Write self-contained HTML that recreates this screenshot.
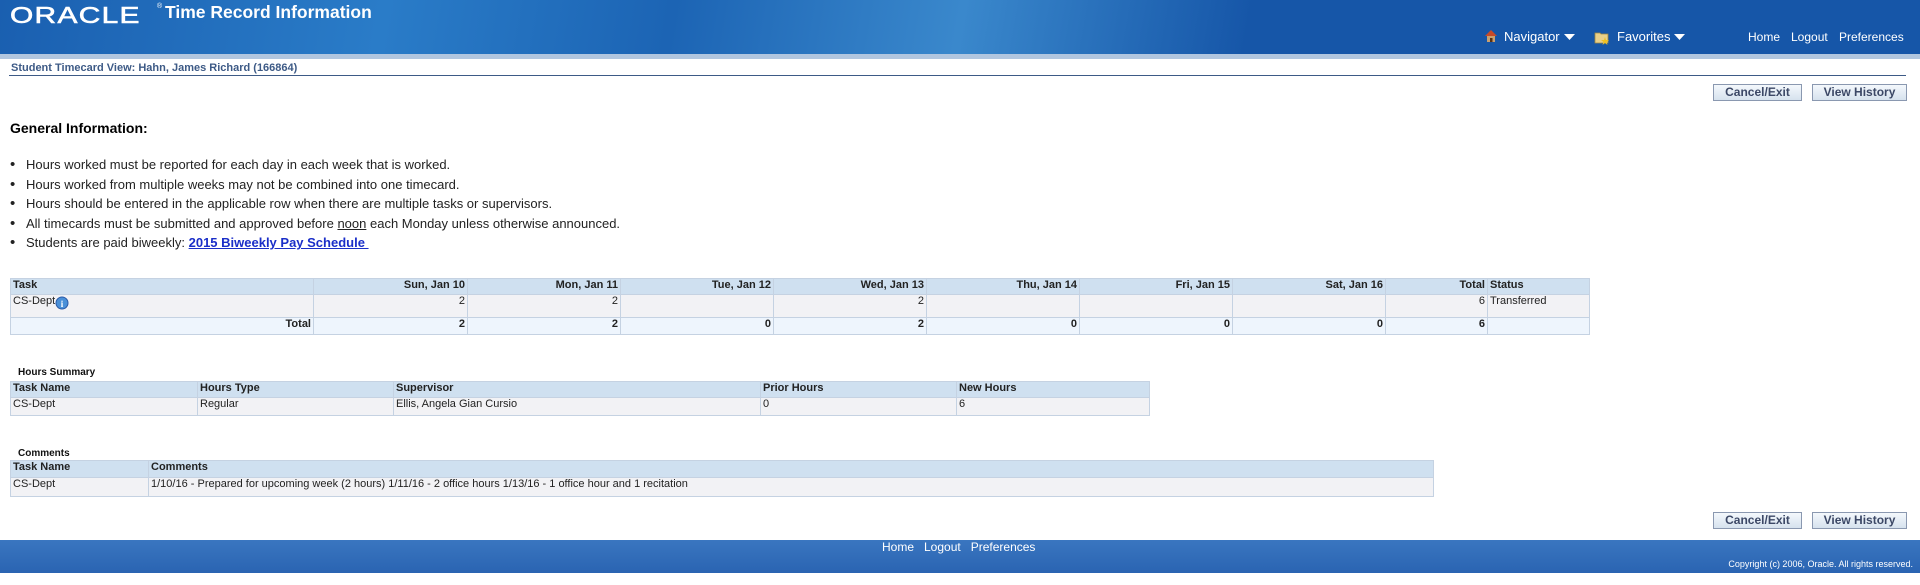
<!DOCTYPE html>
<html><head><meta charset="utf-8"><style>
*{margin:0;padding:0;box-sizing:border-box}
body{width:1920px;height:585px;position:relative;background:#fff;font-family:"Liberation Sans",sans-serif;overflow:hidden}
.a{position:absolute;white-space:nowrap}
#hdr{position:absolute;left:0;top:0;width:1920px;height:54px;background:linear-gradient(100deg,#1a5fb0 0%,#2a7cc8 20%,#1c64b4 35%,#3a88cc 50%,#1656a8 65%,#1656a8 100%)}
#band{position:absolute;left:0;top:54px;width:1920px;height:5px;background:#b1c6df}
.hl{color:#fff;font-size:13px}
.btn{position:absolute;height:17px;border:1px solid #8a98b0;background:linear-gradient(#f4f8fc,#d6e2ee);color:#3c4866;font-weight:bold;font-size:12px;text-align:center;line-height:15px}
table{position:absolute;border-collapse:collapse;font-size:11px;color:#222}
td,th{border:1px solid #c5d2e2;padding:0 2px;white-space:nowrap;vertical-align:top}
th{background:#cfe0f0;text-align:left;font-weight:bold;color:#222}
.r{text-align:right}
.d td{background:#f2f2f5}
.t td{background:#eef5fd;font-weight:bold;text-align:right}
.b{display:inline-block;width:16px;font-size:15px}
</style></head><body>
<div id="hdr"></div><div id="band"></div>
<div class="a" style="left:10px;top:2px;color:#fff;font-size:23px;letter-spacing:1px;transform:scaleX(1.3);transform-origin:left;-webkit-text-stroke:0.6px #fff">ORACLE</div>
<div class="a" style="left:157px;top:3px;color:#fff;font-size:7px">®</div>
<div class="a" style="left:165px;top:2px;color:#fff;font-size:17.5px;font-weight:bold">Time Record Information</div>
<svg class="a" style="left:1484px;top:29px" width="14" height="14" viewBox="0 0 14 14"><path d="M1 7 L7 1 L13 7Z" fill="#c84a28"/><rect x="3" y="7" width="8" height="6" fill="#c9a070"/><rect x="6" y="9" width="2.5" height="4" fill="#5a3010"/></svg>
<div class="a hl" style="left:1504px;top:29px">Navigator</div>
<svg class="a" style="left:1564px;top:34px" width="11" height="7"><path d="M0 0H11L5.5 6Z" fill="#fff"/></svg>
<svg class="a" style="left:1594px;top:30px" width="17" height="15" viewBox="0 0 17 15"><path d="M1 3H6L7 4H14V13H1Z" fill="#e8d08a" stroke="#a08840" stroke-width=".8"/><path d="M11 7L12 10L15 10L12.5 12L13.5 15L11 13L8.5 15L9.5 12L7 10L10 10Z" fill="#f0c020"/></svg>
<div class="a hl" style="left:1617px;top:29px">Favorites</div>
<svg class="a" style="left:1674px;top:34px" width="11" height="7"><path d="M0 0H11L5.5 6Z" fill="#fff"/></svg>
<div class="a hl" style="left:1748px;top:30px;font-size:12px">Home</div>
<div class="a hl" style="left:1791px;top:30px;font-size:12px">Logout</div>
<div class="a hl" style="left:1839px;top:30px;font-size:12px">Preferences</div>

<div class="a" style="left:11px;top:62px;font-size:11px;font-weight:bold;color:#3d5a86">Student Timecard View: Hahn, James Richard (166864)</div>
<div class="a" style="left:9px;top:75px;width:1897px;height:1px;background:#3d5a86"></div>
<div class="btn" style="left:1713px;top:84px;width:89px">Cancel/Exit</div>
<div class="btn" style="left:1812px;top:84px;width:95px">View History</div>

<div class="a" style="left:10px;top:120px;font-size:14px;font-weight:bold;color:#000">General Information:</div>
<div class="a" style="left:10px;top:155px;font-size:13px;color:#222;line-height:19.6px">
<div><span class="b">•</span>Hours worked must be reported for each day in each week that is worked.</div>
<div><span class="b">•</span>Hours worked from multiple weeks may not be combined into one timecard.</div>
<div><span class="b">•</span>Hours should be entered in the applicable row when there are multiple tasks or supervisors.</div>
<div><span class="b">•</span>All timecards must be submitted and approved before <u>noon</u> each Monday unless otherwise announced.</div>
<div><span class="b">•</span>Students are paid biweekly: <b style="color:#1a2ec8;text-decoration:underline">2015 Biweekly Pay Schedule&nbsp;</b></div>
</div>

<table style="left:10px;top:278px;width:1580px">
<tr style="height:16px"><th style="width:303px">Task</th><th class="r" style="width:154px">Sun, Jan 10</th><th class="r" style="width:153px">Mon, Jan 11</th><th class="r" style="width:153px">Tue, Jan 12</th><th class="r" style="width:153px">Wed, Jan 13</th><th class="r" style="width:153px">Thu, Jan 14</th><th class="r" style="width:153px">Fri, Jan 15</th><th class="r" style="width:153px">Sat, Jan 16</th><th class="r" style="width:102px">Total</th><th>Status</th></tr>
<tr class="d" style="height:23px"><td>CS-Dept<svg width="14" height="14" style="vertical-align:-6px"><circle cx="7" cy="7" r="6" fill="#4a90d8" stroke="#2a5aa8"/><text x="7" y="11" font-size="9" fill="#fff" text-anchor="middle" font-family="Liberation Serif" font-weight="bold">i</text></svg></td><td class="r">2</td><td class="r">2</td><td></td><td class="r">2</td><td></td><td></td><td></td><td class="r">6</td><td>Transferred</td></tr>
<tr class="t" style="height:17px"><td>Total</td><td>2</td><td>2</td><td>0</td><td>2</td><td>0</td><td>0</td><td>0</td><td>6</td><td></td></tr>
</table>

<div class="a" style="left:18px;top:367px;font-size:10px;font-weight:bold;color:#111">Hours Summary</div>
<table style="left:10px;top:381px;width:1140px">
<tr style="height:16px"><th style="width:187px">Task Name</th><th style="width:196px">Hours Type</th><th style="width:367px">Supervisor</th><th style="width:196px">Prior Hours</th><th>New Hours</th></tr>
<tr class="d" style="height:18px"><td>CS-Dept</td><td>Regular</td><td>Ellis, Angela Gian Cursio</td><td>0</td><td>6</td></tr>
</table>

<div class="a" style="left:18px;top:448px;font-size:10px;font-weight:bold;color:#111">Comments</div>
<table style="left:10px;top:460px;width:1424px">
<tr style="height:17px"><th style="width:138px">Task Name</th><th>Comments</th></tr>
<tr class="d" style="height:19px"><td>CS-Dept</td><td>1/10/16 - Prepared for upcoming week (2 hours) 1/11/16 - 2 office hours 1/13/16 - 1 office hour and 1 recitation</td></tr>
</table>

<div class="btn" style="left:1713px;top:512px;width:89px">Cancel/Exit</div>
<div class="btn" style="left:1812px;top:512px;width:95px">View History</div>

<div class="a" style="left:0;top:540px;width:1920px;height:33px;background:linear-gradient(#3a76c0,#2a64b2)"></div>
<div class="a" style="left:882px;top:540px;color:#fff;font-size:12px">Home&nbsp;&nbsp; Logout&nbsp;&nbsp; Preferences</div>
<div class="a" style="right:7px;top:559px;color:#fff;font-size:9px">Copyright (c) 2006, Oracle. All rights reserved.</div>
</body></html>
